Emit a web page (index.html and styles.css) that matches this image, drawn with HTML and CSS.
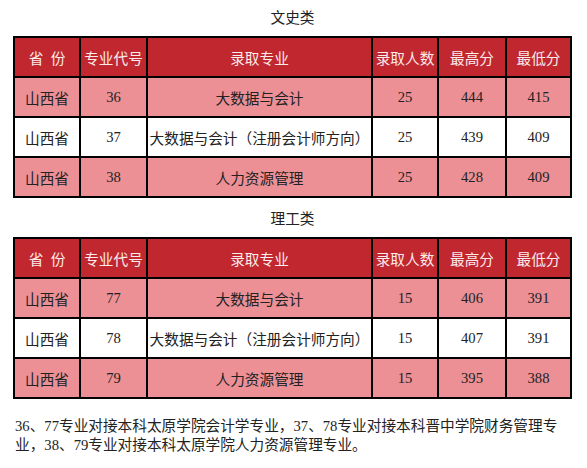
FILE: index.html
```html
<!DOCTYPE html>
<html lang="zh-CN">
<head>
<meta charset="utf-8">
<link rel="stylesheet" href="styles.css">
</head>
<body>
<div class="page">
  <section class="section">
    <div class="title">文史类</div>
    <table class="score">
      <colgroup><col class="c1"><col class="c2"><col class="c3"><col class="c4"><col class="c5"><col class="c6"></colgroup>
      <thead>
        <tr><th>省&nbsp;&nbsp;份</th><th>专业代号</th><th>录取专业</th><th>录取人数</th><th>最高分</th><th>最低分</th></tr>
      </thead>
      <tbody>
        <tr class="pink"><td>山西省</td><td>36</td><td>大数据与会计</td><td>25</td><td>444</td><td>415</td></tr>
        <tr class="white"><td>山西省</td><td>37</td><td class="long">大数据与会计（注册会计师方向）</td><td>25</td><td>439</td><td>409</td></tr>
        <tr class="pink"><td>山西省</td><td>38</td><td>人力资源管理</td><td>25</td><td>428</td><td>409</td></tr>
      </tbody>
    </table>
  </section>
  <section class="section">
    <div class="title">理工类</div>
    <table class="score">
      <colgroup><col class="c1"><col class="c2"><col class="c3"><col class="c4"><col class="c5"><col class="c6"></colgroup>
      <thead>
        <tr><th>省&nbsp;&nbsp;份</th><th>专业代号</th><th>录取专业</th><th>录取人数</th><th>最高分</th><th>最低分</th></tr>
      </thead>
      <tbody>
        <tr class="pink"><td>山西省</td><td>77</td><td>大数据与会计</td><td>15</td><td>406</td><td>391</td></tr>
        <tr class="white"><td>山西省</td><td>78</td><td class="long">大数据与会计（注册会计师方向）</td><td>15</td><td>407</td><td>391</td></tr>
        <tr class="pink"><td>山西省</td><td>79</td><td>人力资源管理</td><td>15</td><td>395</td><td>388</td></tr>
      </tbody>
    </table>
  </section>
  <p class="note">36、77专业对接本科太原学院会计学专业，37、78专业对接本科晋中学院财务管理专业，38、79专业对接本科太原学院人力资源管理专业。</p>
</div>
</body>
</html>
```
FILE: styles.css
```css
html, body {
  margin: 0;
  padding: 0;
  background: #ffffff;
}
body {
  font-family: "Liberation Serif", "Noto Sans CJK SC", serif;
  font-size: 14.67px;
  color: #222222;
}
.page {
  width: 559px;
  padding: 0 15px 0 13px;
}
.title {
  height: 36px;
  line-height: 36px;
  text-align: center;
  font-size: 14.67px;
  color: #222222;
}
.score {
  width: 559px;
  table-layout: fixed;
  border-collapse: collapse;
  margin-bottom: 3px;
}
.c1 { width: 66px; }
.c2 { width: 67px; }
.c3 { width: 225px; }
.c4 { width: 66px; }
.c5 { width: 68px; }
.c6 { width: 65px; }
.score th, .score td {
  border: 2px solid #000000;
  height: 38px;
  padding: 0;
  text-align: center;
  vertical-align: middle;
  font-weight: normal;
  white-space: nowrap;
  overflow: hidden;
}
.score th {
  background: #c1272f;
  color: #fbecec;
}
.score tr.pink td {
  background: #ec9096;
}
.score tr.white td {
  background: #ffffff;
}
.note {
  margin: 18px 0 0 2px;
  line-height: 19px;
  font-size: 14.67px;
  color: #222222;
}
```
